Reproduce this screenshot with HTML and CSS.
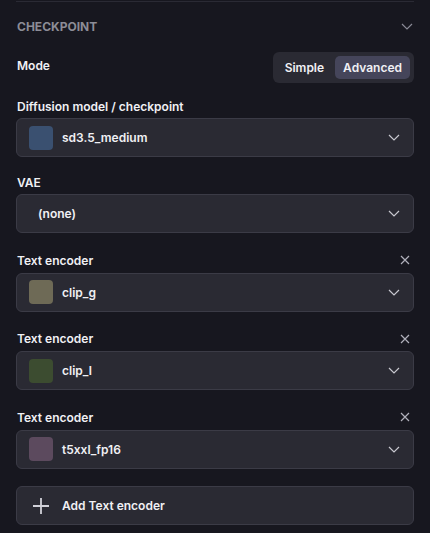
FILE: index.html
```html
<!DOCTYPE html>
<html>
<head>
<meta charset="utf-8">
<link rel="stylesheet" href="styles.css">
</head>
<body>
<div class="panel">
  <div class="header">
    <span class="title">CHECKPOINT</span>
    <svg class="hchev" width="12" height="7" viewBox="0 0 12 7"><path d="M1 1l5 5 5-5" fill="none" stroke="#8a8a96" stroke-width="1.2"/></svg>
  </div>
  <div class="mode-row">
    <span class="label">Mode</span>
    <div class="seg">
      <span class="seg-btn">Simple</span>
      <span class="seg-btn active">Advanced</span>
    </div>
  </div>
  <div class="field first">
    <div class="label-row"><span class="label">Diffusion model / checkpoint</span></div>
    <div class="select">
      <span class="swatch sw-blue"></span><span class="val">sd3.5_medium</span>
      <svg class="chev" width="12" height="7" viewBox="0 0 12 7"><path d="M1 1l5 5 5-5" fill="none" stroke="#c8c8d0" stroke-width="1.2"/></svg>
    </div>
  </div>
  <div class="field">
    <div class="label-row"><span class="label">VAE</span></div>
    <div class="select">
      <span class="val none">(none)</span>
      <svg class="chev" width="12" height="7" viewBox="0 0 12 7"><path d="M1 1l5 5 5-5" fill="none" stroke="#c8c8d0" stroke-width="1.2"/></svg>
    </div>
  </div>
  <div class="field removable">
    <div class="label-row"><span class="label">Text encoder</span>
      <svg class="x" width="10" height="10" viewBox="0 0 10 10"><path d="M1 1l8 8M9 1l-8 8" stroke="#b0b0ba" stroke-width="1.2"/></svg></div>
    <div class="select">
      <span class="swatch sw-olive"></span><span class="val">clip_g</span>
      <svg class="chev" width="12" height="7" viewBox="0 0 12 7"><path d="M1 1l5 5 5-5" fill="none" stroke="#c8c8d0" stroke-width="1.2"/></svg>
    </div>
  </div>
  <div class="field removable">
    <div class="label-row"><span class="label">Text encoder</span>
      <svg class="x" width="10" height="10" viewBox="0 0 10 10"><path d="M1 1l8 8M9 1l-8 8" stroke="#b0b0ba" stroke-width="1.2"/></svg></div>
    <div class="select">
      <span class="swatch sw-green"></span><span class="val">clip_l</span>
      <svg class="chev" width="12" height="7" viewBox="0 0 12 7"><path d="M1 1l5 5 5-5" fill="none" stroke="#c8c8d0" stroke-width="1.2"/></svg>
    </div>
  </div>
  <div class="field removable">
    <div class="label-row"><span class="label">Text encoder</span>
      <svg class="x" width="10" height="10" viewBox="0 0 10 10"><path d="M1 1l8 8M9 1l-8 8" stroke="#b0b0ba" stroke-width="1.2"/></svg></div>
    <div class="select">
      <span class="swatch sw-mauve"></span><span class="val">t5xxl_fp16</span>
      <svg class="chev" width="12" height="7" viewBox="0 0 12 7"><path d="M1 1l5 5 5-5" fill="none" stroke="#c8c8d0" stroke-width="1.2"/></svg>
    </div>
  </div>
  <div class="add">
    <svg class="plus" width="18" height="18" viewBox="0 0 18 18"><path d="M9 1v16M1 9h16" stroke="#d0d0d8" stroke-width="1.8"/></svg>
    <span class="val">Add Text encoder</span>
  </div>
</div>
</body>
</html>
```
FILE: styles.css
```css
html, body {
  margin: 0;
  padding: 0;
  background: #17171f;
}
body {
  font-family: Inter, "Noto Sans", sans-serif;
  color: #f0f0f4;
  font-size: 12px;
}
.panel {
  margin: 1px 16px 0;
  border-top: 1px solid #2a2a34;
  display: flex;
  flex-direction: column;
}
.header {
  height: 48px;
  display: flex;
  align-items: center;
  justify-content: space-between;
  padding-right: 1px;
}
.title {
  font-size: 12px;
  font-weight: 700;
  color: #8c8c96;
  padding-left: 1px;
}
.mode-row {
  display: flex;
  justify-content: space-between;
  align-items: center;
  margin-top: 2px;
}
.label {
  font-weight: 600;
  padding-left: 1px;
}
.mode-row .label {
  margin-top: -4px;
}
.seg {
  display: flex;
  background: #2a2a33;
  border-radius: 6px;
  padding: 4px;
  box-sizing: border-box;
  height: 31px;
}
.seg-btn {
  font-weight: 600;
  padding: 0 8px;
  display: flex;
  align-items: center;
  border-radius: 5px;
  color: #f0f0f4;
}
.seg-btn:first-child {
  margin-right: 3px;
}
.seg-btn.active {
  background: #45455a;
}
.field {
  display: flex;
  flex-direction: column;
  margin-top: 16px;
}
.field.first {
  margin-top: 14px;
}
.field.removable {
  margin-top: 16.5px;
}
.label-row {
  display: flex;
  justify-content: space-between;
  align-items: center;
  height: 19px;
  margin-bottom: 2px;
  padding-right: 4px;
}
.removable .label-row {
  height: 21px;
}
.select, .add {
  height: 39px;
  box-sizing: border-box;
  background: #2a2a33;
  border: 1px solid #3b3b46;
  border-radius: 6px;
  display: flex;
  align-items: center;
  padding: 0 13px 0 12px;
}
.swatch {
  width: 24px;
  height: 24px;
  border-radius: 4px;
  flex: none;
  margin-right: 9px;
}
.sw-blue { background: #3a5070; }
.sw-olive { background: #6e6a56; }
.sw-green { background: #3c4c30; }
.sw-mauve { background: #5c4a5e; }
.val {
  font-weight: 600;
  flex: 1;
}
.val.none {
  padding-left: 9px;
}
.chev { flex: none; }
.add {
  margin-top: 17px;
  padding-left: 15px;
}
.plus { margin-right: 12px; flex: none; margin-top: 2px; }
```
